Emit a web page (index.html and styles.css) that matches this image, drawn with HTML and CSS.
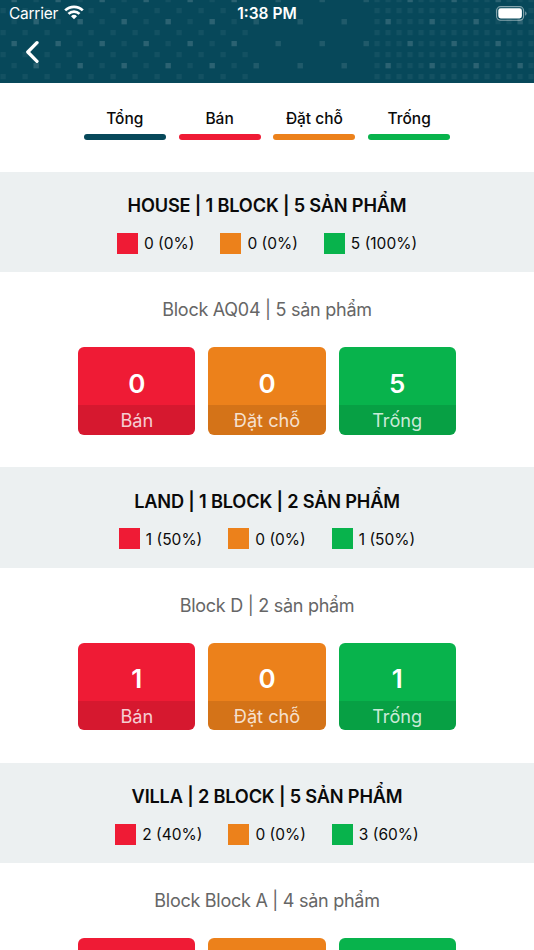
FILE: index.html
```
<!DOCTYPE html>
<html lang="vi">
<head>
  <meta charset="UTF-8" />
  <meta name="viewport" content="width=device-width, initial-scale=1" />
  <title>Sản phẩm</title>
  <link rel="stylesheet" href="styles.css">
</head>
<body>
  <header class="header">
    <!-- Dotted background -->
    <svg class="header-dots" width="534" height="83">
      <defs>
        <pattern id="bright" width="44" height="44" patternUnits="userSpaceOnUse">
          <rect x="33.5" y="19" width="5.4" height="5.4" />
          <rect x="11.5" y="41" width="5.4" height="3" />
          <rect x="11.5" y="0" width="5.4" height="2.2" />
        </pattern>
        <pattern id="sparse" width="22" height="22" patternUnits="userSpaceOnUse">
          <rect x="11.5" y="19" width="5.2" height="3" />
          <rect x="11.5" y="0" width="5.2" height="2.2" />
          <rect x="0.5" y="8" width="5.2" height="5.2" />
        </pattern>
        <pattern id="dense" x="374.5" y="8" width="11" height="11" patternUnits="userSpaceOnUse">
          <rect width="5.2" height="5.2" />
        </pattern>
      </defs>
      <rect class="dots-dim" width="250" height="83" fill="url(#sparse)" />
      <rect class="dots-dim" x="374" width="160" height="83" fill="url(#dense)" />
      <rect class="dots-bright" width="534" height="83" fill="url(#bright)" />
    </svg>

    <div class="status-bar">
      <div class="carrier">
        <span>Carrier</span>
        <svg width="20" height="15" viewBox="0 0 20 15">
          <g fill="none" stroke="#fff" stroke-width="2.7">
            <path d="M1.2 5.4a12.5 12.5 0 0 1 17.6 0" />
            <path d="M4.5 8.9a7.9 7.9 0 0 1 11 0" />
          </g>
          <path d="M10 14.3l-3-3.1a4.3 4.3 0 0 1 6 0z" fill="#fff" />
        </svg>
      </div>
      <div class="time">1:38 PM</div>
      <svg class="battery" width="32" height="15" viewBox="0 0 32 15">
        <rect x="0.6" y="0.6" width="27" height="13.6" rx="4" fill="none" stroke="#fff" stroke-opacity="0.5" stroke-width="1.1" />
        <rect x="2.3" y="2.3" width="23.6" height="10.2" rx="2.4" fill="#fff" />
        <path d="M29.2 5.2v4.5c1.8-.7 1.8-3.8 0-4.5z" fill="#fff" fill-opacity="0.5" />
      </svg>
    </div>

    <div class="nav-bar">
      <svg width="14" height="24" viewBox="0 0 14 24">
        <path d="M12 2.7L2.8 12l9.2 9.3" fill="none" stroke="#fff" stroke-width="3.3" stroke-linecap="round" stroke-linejoin="round" />
      </svg>
    </div>
  </header>

  <nav class="tabs">
    <div class="tab total">Tổng</div>
    <div class="tab sold">Bán</div>
    <div class="tab reserved">Đặt chỗ</div>
    <div class="tab empty">Trống</div>
  </nav>

  <section class="group">
    <div class="group-head">
      <h2>HOUSE | 1 BLOCK | 5 SẢN PHẨM</h2>
      <div class="legend">
        <span class="legend-item sold">0 (0%)</span>
        <span class="legend-item reserved">0 (0%)</span>
        <span class="legend-item empty">5 (100%)</span>
      </div>
    </div>
    <h3>Block AQ04 | 5 sản phẩm</h3>
    <div class="cards">
      <div class="card sold"><strong>0</strong><span>Bán</span></div>
      <div class="card reserved"><strong>0</strong><span>Đặt chỗ</span></div>
      <div class="card empty"><strong>5</strong><span>Trống</span></div>
    </div>
  </section>

  <section class="group">
    <div class="group-head">
      <h2>LAND | 1 BLOCK | 2 SẢN PHẨM</h2>
      <div class="legend">
        <span class="legend-item sold">1 (50%)</span>
        <span class="legend-item reserved">0 (0%)</span>
        <span class="legend-item empty">1 (50%)</span>
      </div>
    </div>
    <h3>Block D | 2 sản phẩm</h3>
    <div class="cards">
      <div class="card sold"><strong>1</strong><span>Bán</span></div>
      <div class="card reserved"><strong>0</strong><span>Đặt chỗ</span></div>
      <div class="card empty"><strong>1</strong><span>Trống</span></div>
    </div>
  </section>

  <section class="group">
    <div class="group-head">
      <h2>VILLA | 2 BLOCK | 5 SẢN PHẨM</h2>
      <div class="legend">
        <span class="legend-item sold">2 (40%)</span>
        <span class="legend-item reserved">0 (0%)</span>
        <span class="legend-item empty">3 (60%)</span>
      </div>
    </div>
    <h3>Block Block A | 4 sản phẩm</h3>
    <div class="cards">
      <div class="card sold"></div>
      <div class="card reserved"></div>
      <div class="card empty"></div>
    </div>
  </section>
</body>
</html>
```
FILE: styles.css
```
* {
  box-sizing: border-box;
  margin: 0;
  padding: 0;
}

body {
  font-family: Inter, "Liberation Sans", sans-serif;
  height: 100vh;
  overflow: hidden;
  background: #fff;
  color: #0a0a0a;
}

/* Status colours */
.total {
  --color: #07485a;
}

.sold {
  --color: #ef1b35;
}

.reserved {
  --color: #ec811b;
}

.empty {
  --color: #08b34c;
}

/* Header */
.header {
  position: relative;
  height: 82.7px;
  background: #07485a;
  color: #fff;
  overflow: hidden;
}

.header-dots {
  position: absolute;
  top: 0;
  left: 0;
}

pattern rect {
  fill: #fff;
}

.dots-dim {
  opacity: 0.05;
}

.dots-bright {
  opacity: 0.1;
}

.status-bar {
  position: relative;
  display: grid;
  grid-template-columns: 1fr auto 1fr;
  align-items: center;
  height: 27px;
  padding: 0 6px 0 9px;
  font-size: 15.5px;
}

.carrier {
  display: flex;
  align-items: center;
  gap: 6px;
  letter-spacing: -0.25px;
}

.carrier svg {
  margin-top: -2px;
}

.time {
  font-weight: 600;
  margin-left: -3px;
}

.battery {
  justify-self: end;
}

.nav-bar {
  position: relative;
  padding: 13px 25px;
}

/* Tabs */
.tabs {
  display: flex;
  justify-content: center;
  gap: 12.8px;
  height: 89.3px;
  padding-top: 25.3px;
}

.tab {
  width: 82px;
  font-size: 15.5px;
  font-weight: 500;
  line-height: 22px;
  text-align: center;
}

.tab::after {
  content: "";
  display: block;
  height: 5.6px;
  margin-top: 4.2px;
  border-radius: 3px;
  background: var(--color);
}

/* Groups */
.group {
  height: 295.4px;
  text-align: center;
}

.group-head {
  height: 100.5px;
  padding-top: 21.5px;
  background: #ecf0f1;
}

.group-head h2 {
  font-size: 18.2px;
  font-weight: 600;
  line-height: 24px;
  letter-spacing: -0.18px;
}

.legend {
  display: flex;
  justify-content: center;
  gap: 26px;
  margin-top: 15px;
}

.legend-item {
  display: flex;
  align-items: center;
  gap: 6px;
  font-size: 15.5px;
  line-height: 21px;
  padding-top: 1px;
}

.legend-item::before {
  content: "";
  width: 21px;
  height: 21px;
  margin-top: -1px;
  background: var(--color);
}

.group h3 {
  padding-top: 25.7px;
  color: #666;
  font-size: 18px;
  font-weight: 400;
  line-height: 24px;
  letter-spacing: -0.27px;
}

.cards {
  display: flex;
  justify-content: center;
  gap: 13px;
  margin-top: 25.1px;
}

.card {
  display: flex;
  flex-direction: column;
  width: 117.2px;
  height: 87.8px;
  border-radius: 6px;
  background: var(--color);
  color: #fff;
  overflow: hidden;
}

.card strong {
  flex: 1;
  padding-top: 14.6px;
  font-size: 26px;
  font-weight: 600;
  line-height: 43.5px;
}

.card span {
  height: 29.7px;
  background: rgba(0, 0, 0, 0.1);
  color: rgba(255, 255, 255, 0.8);
  font-size: 18.2px;
  line-height: 31px;
}
```
